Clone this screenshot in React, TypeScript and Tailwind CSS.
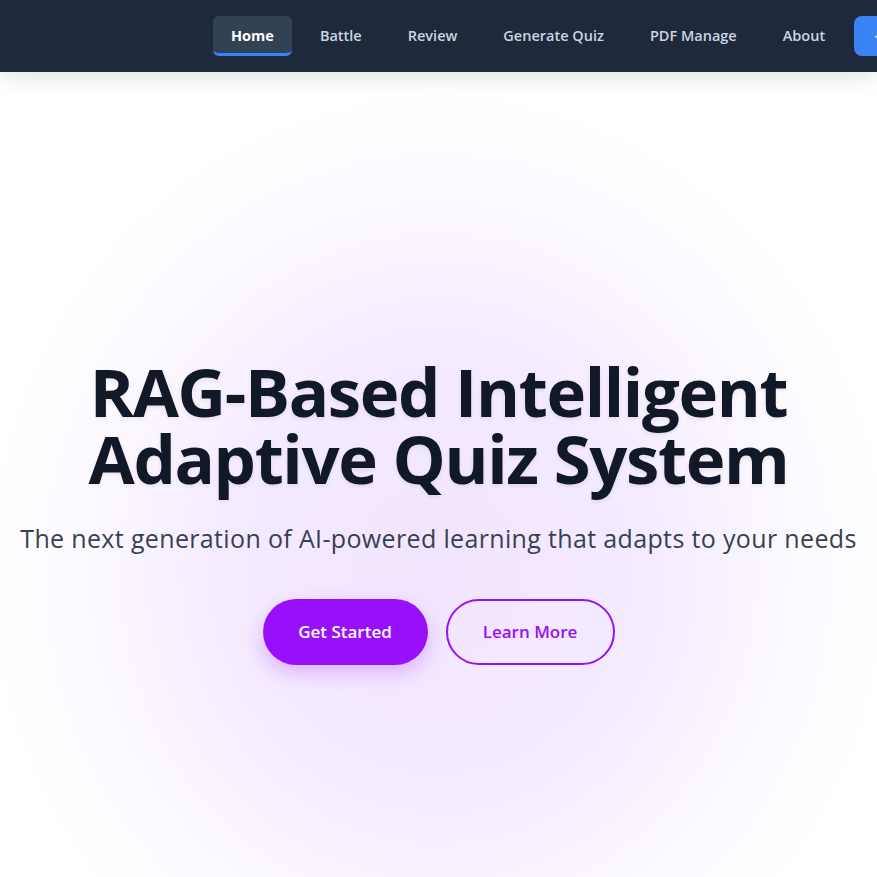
import React from "react";

const links = ["Home", "Battle", "Review", "Generate Quiz", "PDF Manage", "About"];

function Navbar() {
  return (
    <nav className="relative z-10 h-[72px] w-full bg-[#1e293b] shadow-[0_4px_24px_rgba(0,0,0,0.12)] overflow-hidden">
      <div className="flex h-full items-center pl-[213px] gap-[10px] whitespace-nowrap">
        {links.map((l, i) =>
          i === 0 ? (
            <a key={l} className="shrink-0 h-10 flex items-center px-[18px] rounded-md bg-[#334155] border-b-[3px] border-[#3b82f6] pt-[3px] text-white font-bold text-[14.5px]">
              {l}
            </a>
          ) : (
            <a key={l} className="shrink-0 h-10 flex items-center px-[18px] text-[#cbd5e1] font-semibold text-[14.5px]">
              {l}
            </a>
          )
        )}
        <button className="shrink-0 h-10 ml-[1px] px-5 rounded-lg bg-[#3b82f6] text-white font-semibold text-[15px]">
          + New
        </button>
      </div>
    </nav>
  );
}

export default function App() {
  return (
    <div className="h-[877px] w-full overflow-hidden bg-white font-['Open_Sans',sans-serif]">
      <Navbar />
      <main className="relative h-[805px] bg-[radial-gradient(ellipse_52%_60%_at_50%_62%,rgba(233,213,255,0.62)_0%,rgba(233,213,255,0.48)_45%,rgba(240,225,255,0.18)_80%,rgba(255,255,255,0)_100%)]">
        <div className="flex flex-col items-center pt-[286px] text-center">
          <h1 className="text-[67px] leading-[67px] font-bold tracking-[-0.02em] text-[#111827] [text-shadow:0_2px_4px_rgba(0,0,0,0.08)]">
            RAG-Based Intelligent
            <br />
            Adaptive Quiz System
          </h1>
          <p className="mt-[30px] text-[25px] leading-8 text-[#374151] tracking-[0.014em] whitespace-nowrap">
            The next generation of AI-powered learning that adapts to your needs
          </p>
          <div className="mt-[45px] flex gap-[18px]">
            <button className="h-[66px] w-[165px] rounded-full bg-[#9810fa] text-white font-semibold text-[17px] shadow-[0_8px_20px_rgba(152,16,250,0.25)]">
              Get Started
            </button>
            <button className="h-[66px] w-[169px] rounded-full border-2 border-[#9810fa] text-[#9810fa] font-semibold text-[17px]">
              Learn More
            </button>
          </div>
        </div>
      </main>
    </div>
  );
}
